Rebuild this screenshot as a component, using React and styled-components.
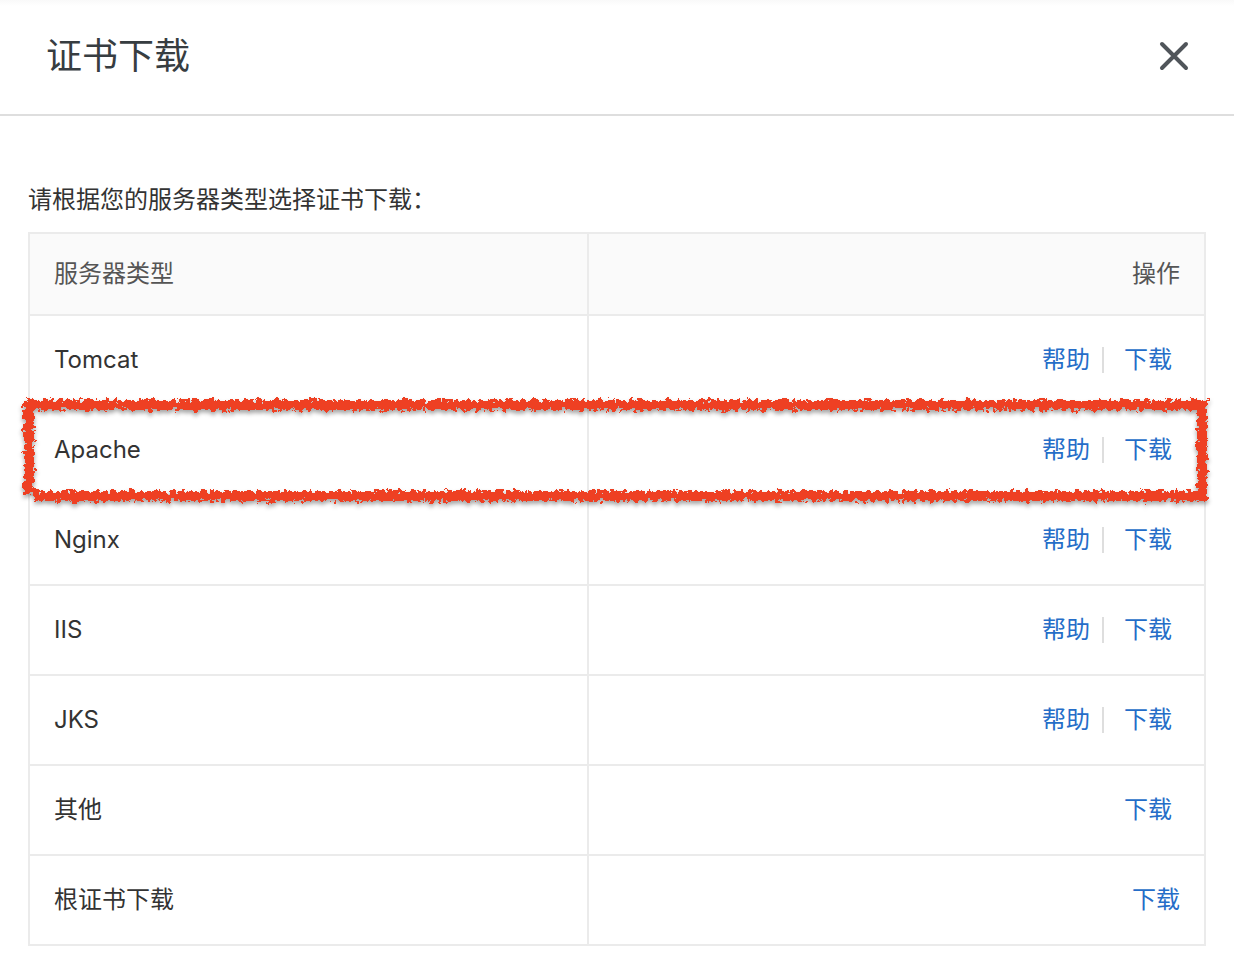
import React from "react";
import styled, { createGlobalStyle } from "styled-components";

const GlobalStyle = createGlobalStyle`
  *, *::before, *::after { box-sizing: border-box; }
  body {
    margin: 0;
    background: #fff;
    color: #333;
    font-family: Inter, "Noto Sans CJK SC", sans-serif;
    font-size: 24px;
    line-height: 36px;
  }
`;

const Dialog = styled.section`
  width: 100%;
  background: linear-gradient(#f9f9f9, #fff 6px);
`;

const Header = styled.header`
  display: flex;
  align-items: center;
  justify-content: space-between;
  height: 116px;
  padding: 0 40px 2px 46px;
  border-bottom: 2px solid #dedede;
`;

const Title = styled.h1`
  margin: 0;
  color: #373d41;
  font-size: 36px;
  font-weight: 400;
  line-height: 54px;
`;

const CloseButton = styled.button`
  display: flex;
  padding: 4px;
  border: 0;
  background: none;
  color: #50555a;
  cursor: pointer;
`;

const Body = styled.div`
  padding: 66px 28px 16px;
`;

const Hint = styled.p`
  margin: 0 0 14px;
`;

const Table = styled.table`
  width: 100%;
  table-layout: fixed;
  border-collapse: collapse;
`;

const HeadCell = styled.th`
  width: ${(p) => p.$width || "auto"};
  height: 82px;
  padding: 0 24px;
  border: 2px solid #ebebeb;
  background: #fafafa;
  color: #555;
  font-weight: 400;
  text-align: ${(p) => p.$align || "left"};
`;

const Row = styled.tr`
  position: relative;
`;

const Cell = styled.td`
  height: 90px;
  padding: 0 24px;
  border: 2px solid #ebebeb;
`;

const Actions = styled.div`
  display: flex;
  align-items: center;
  justify-content: flex-end;
  padding-right: ${(p) => (p.$flush ? "0" : "8px")};
`;

const ActionLink = styled.a`
  color: #256dc8;
  text-decoration: none;
`;

const Divider = styled.span`
  width: 2px;
  height: 26px;
  margin: 0 20px 0 12px;
  background: #dedede;
`;

const Marker = styled.svg`
  position: absolute;
  top: -8px;
  left: -8px;
  width: calc(100% + 12px);
  height: calc(100% + 17px);
  overflow: visible;
  pointer-events: none;
`;

const Stroke = styled.rect`
  fill: #ee4023;
  x: ${(p) => p.$x};
  y: ${(p) => p.$y};
  width: ${(p) => p.$w};
  height: ${(p) => p.$h};
`;

function BrushFrame() {
  return (
    <Marker aria-hidden="true">
      <defs>
        <filter id="brush" filterUnits="userSpaceOnUse" x="-2%" y="-20%" width="104%" height="140%" colorInterpolationFilters="sRGB">
          <feTurbulence type="fractalNoise" baseFrequency="0.22" numOctaves="3" seed="7" result="noise" />
          <feDisplacementMap in="SourceGraphic" in2="noise" scale="11" xChannelSelector="R" yChannelSelector="G" result="rough" />
          <feGaussianBlur in="rough" stdDeviation="0.4" result="soft" />
          <feDropShadow in="soft" dx="0" dy="3" stdDeviation="2" floodColor="#000" floodOpacity="0.35" />
        </filter>
      </defs>
      <g filter="url(#brush)">
        <Stroke $x="4px" $y="3px" $w="calc(100% - 6px)" $h="10px" />
        <Stroke $x="3px" $y="3px" $w="10px" $h="calc(100% - 13px)" />
        <Stroke $x="calc(100% - 12px)" $y="3px" $w="10px" $h="calc(100% - 6px)" />
        <Stroke $x="13px" $y="calc(100% - 13px)" $w="calc(100% - 15px)" $h="10px" />
      </g>
    </Marker>
  );
}

const servers = [
  { name: "Tomcat", help: true },
  { name: "Apache", help: true, marked: true },
  { name: "Nginx", help: true },
  { name: "IIS", help: true },
  { name: "JKS", help: true },
  { name: "其他" },
  { name: "根证书下载", flush: true },
];

export default function App() {
  return (
    <>
      <GlobalStyle />
      <Dialog aria-labelledby="dialog-title">
        <Header>
          <Title id="dialog-title">证书下载</Title>
          <CloseButton type="button" aria-label="关闭">
            <svg width="32" height="32" viewBox="0 0 32 32" fill="none" stroke="currentColor" strokeWidth="4" strokeLinecap="round">
              <path d="M4 4L28 28M28 4L4 28" />
            </svg>
          </CloseButton>
        </Header>
        <Body>
          <Hint>请根据您的服务器类型选择证书下载：</Hint>
          <Table>
            <thead>
              <tr>
                <HeadCell scope="col" $width="47.5%">服务器类型</HeadCell>
                <HeadCell scope="col" $align="right">操作</HeadCell>
              </tr>
            </thead>
            <tbody>
              {servers.map((s) => (
                <Row key={s.name}>
                  <Cell>
                    {s.name}
                    {s.marked && <BrushFrame />}
                  </Cell>
                  <Cell>
                    <Actions $flush={s.flush}>
                      {s.help && <ActionLink href="#help">帮助</ActionLink>}
                      {s.help && <Divider />}
                      <ActionLink href="#download">下载</ActionLink>
                    </Actions>
                  </Cell>
                </Row>
              ))}
            </tbody>
          </Table>
        </Body>
      </Dialog>
    </>
  );
}
